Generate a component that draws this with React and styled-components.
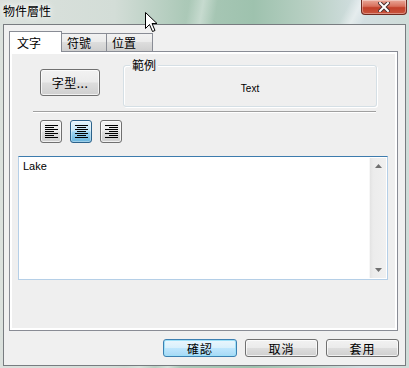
import React from 'react'
import styled, { createGlobalStyle, css } from 'styled-components'

const GlobalStyle = createGlobalStyle`
  html, body { margin: 0; padding: 0; }
  body {
    width: 409px;
    height: 368px;
    overflow: hidden;
    font-family: "Noto Sans CJK TC", "Liberation Sans", sans-serif;
  }
`

const Glass = styled.div`
  position: relative;
  width: 409px;
  height: 368px;
  display: flex;
  flex-direction: column;
  background:
    linear-gradient(118deg, transparent 58%, rgba(255,255,255,.45) 60%, transparent 62%),
    linear-gradient(100deg, transparent 40%, rgba(255,255,255,.35) 43%, transparent 46%),
    linear-gradient(90deg, #dbe1dd 0%, #d3ddd7 28%, #acc9b8 45%, #9ec2ae 62%, #b9d0c4 76%, #d3dfe2 88%, #cfdcd8 100%);
`

const TitleBar = styled.div`
  height: 24px;
  display: flex;
  align-items: flex-start;
`

const Title = styled.span`
  margin: 4px 0 0 3px;
  font-size: 12px;
  line-height: 14px;
  color: #000;
  text-shadow: 0 0 5px #fff, 0 0 8px #fff;
`

const CloseButton = styled.div`
  margin-left: auto;
  margin-right: 2px;
  width: 46px;
  height: 15px;
  box-sizing: border-box;
  border: 1px solid #6f2a20;
  border-top: none;
  border-radius: 0 0 4px 4px;
  background: linear-gradient(#e9a899 0%, #d8705c 45%, #c2402a 55%, #c9553e 100%);
  box-shadow: inset 0 0 0 1px rgba(255,255,255,.35);
  display: flex;
  align-items: center;
  justify-content: center;
`

const Client = styled.div`
  flex: 1;
  margin: 0 3px 2px 3px;
  border: 1px solid #787c80;
  background: #f0f0f0;
  display: flex;
  flex-direction: column;
  padding: 6px 6px 0 5px;
`

const TabRow = styled.div`
  display: flex;
  align-items: flex-end;
  height: 20px;
  position: relative;
  z-index: 1;
`

const Tab = styled.div`
  box-sizing: border-box;
  width: ${p => p.$w}px;
  height: 18px;
  border: 1px solid #898c95;
  border-bottom: none;
  margin-left: -1px;
  padding: 1px 0 0 5px;
  font-size: 12px;
  line-height: 15px;
  color: #000;
  background: linear-gradient(#f2f2f2 0%, #ebebeb 45%, #dddddd 50%, #cfcfcf 100%);
  ${p => p.$active && css`
    height: 21px;
    margin-bottom: -1px;
    margin-left: 0;
    padding: 3px 0 0 7px;
    background: #fff;
  `}
`

const Panel = styled.div`
  box-sizing: border-box;
  width: 389px;
  height: 280px;
  border: 1px solid #898c95;
  background: #efefef;
  box-shadow: inset 0 0 0 2px #fff;
  display: flex;
  flex-direction: column;
`

const TopRow = styled.div`
  display: flex;
  align-items: flex-start;
  margin-top: 6px;
  padding-left: 30px;
`

const buttonFace = css`
  box-sizing: border-box;
  border: 1px solid #707070;
  border-radius: 3px;
  background: linear-gradient(#f2f2f2 0%, #ebebeb 48%, #dddddd 52%, #cfcfcf 100%);
  box-shadow: inset 0 0 0 1px rgba(255,255,255,.7);
  font-size: 12px;
  color: #000;
  display: flex;
  align-items: center;
  justify-content: center;
`

const FontButton = styled.div`
  ${buttonFace}
  width: 60px;
  height: 27px;
  margin-top: 11px;
  letter-spacing: 0.5px;
`

const Group = styled.fieldset`
  margin: 0 0 0 23px;
  width: 254px;
  box-sizing: border-box;
  padding: 10px 0 10px 0;
  border: 1px solid #d5dfe5;
  border-radius: 3px;
  box-shadow: inset 1px 1px 0 #fff, 1px 1px 0 #fff;
  min-inline-size: 0;
`

const Legend = styled.legend`
  margin-left: 6px;
  padding: 0 2px;
  font-size: 12px;
  line-height: 14px;
  background: #efefef;
`

const Sample = styled.div`
  text-align: center;
  font-family: "Liberation Sans", Arial, sans-serif;
  font-size: 10px;
  line-height: 14px;
  color: #000;
`

const Separator = styled.div`
  margin: 4px 0 0 23px;
  width: 343px;
  height: 1px;
  background: #a0a0a0;
  border-bottom: 1px solid #fff;
`

const AlignRow = styled.div`
  display: flex;
  gap: 8px;
  margin: 7px 0 0 30px;
`

const AlignButton = styled.div`
  ${buttonFace}
  width: 22px;
  height: 23px;
  ${p => p.$pressed && css`
    border-color: #2c628b;
    background: linear-gradient(#e5f4fc 0%, #c4e5f6 45%, #98d1ef 55%, #68b3db 100%);
    box-shadow: inset 0 0 0 1px rgba(255,255,255,.35);
  `}
`

const Memo = styled.div`
  box-sizing: border-box;
  margin: 13px 0 0 8px;
  width: 370px;
  height: 124px;
  border: 1px solid #b5cfe7;
  border-top-color: #3d7bad;
  background: #fff;
  display: flex;
`

const MemoText = styled.div`
  flex: 1;
  padding: 3px 4px;
  font-family: "Liberation Sans", Arial, sans-serif;
  font-size: 11px;
  line-height: 13px;
  color: #000;
`

const ScrollTrack = styled.div`
  width: 16px;
  margin: 1px 1px 1px 0;
  background: linear-gradient(90deg, #e3e3e3, #ececec 20%, #f0f0f0);
  border-left: 1px solid #f7f7f7;
  display: flex;
  flex-direction: column;
  justify-content: space-between;
  align-items: center;
  padding: 6px 0 6px;
`

const BottomRow = styled.div`
  display: flex;
  justify-content: flex-end;
  gap: 8px;
  margin-top: 8px;
  padding-right: 0;
`

const DialogButton = styled.div`
  ${buttonFace}
  width: ${p => p.$w}px;
  height: 18px;
  letter-spacing: 1px;
  ${p => p.$default && css`
    border-color: #3c7fb1;
    background: linear-gradient(#eaf6fd 0%, #d9f0fc 48%, #bee6fd 52%, #a7d9f5 100%);
    box-shadow: inset 0 0 0 1px #9ee0f8;
  `}
`

const Cursor = styled.svg`
  position: absolute;
  left: 145px;
  top: 12px;
`

function AlignIcon({ mode }) {
  const widths = [13, 9, 13, 9, 13, 9, 13]
  return (
    <svg width="13" height="13" viewBox="0 0 13 13">
      {widths.map((w, i) => {
        const x = mode === 'left' ? 0 : mode === 'right' ? 13 - w : (13 - w) / 2
        return <rect key={i} x={x} y={i * 2} width={w} height="1" fill="#000" />
      })}
    </svg>
  )
}

function Arrow({ up }) {
  return (
    <svg width="7" height="4" viewBox="0 0 7 4">
      <polygon points={up ? '3.5,0 7,4 0,4' : '0,0 7,0 3.5,4'} fill="#707070" />
    </svg>
  )
}

export default function App() {
  return (
    <>
      <GlobalStyle />
      <Glass>
        <TitleBar>
          <Title>物件層性</Title>
          <CloseButton>
            <svg width="12" height="10" viewBox="0 0 12 10">
              <path d="M2 1 L10 9 M10 1 L2 9" stroke="#4a3030" strokeWidth="4" strokeLinecap="square" />
              <path d="M2 1 L10 9 M10 1 L2 9" stroke="#fff" strokeWidth="2" strokeLinecap="square" />
            </svg>
          </CloseButton>
        </TitleBar>
        <Client>
          <TabRow>
            <Tab $active $w={53}>文字</Tab>
            <Tab $w={46}>符號</Tab>
            <Tab $w={47}>位置</Tab>
          </TabRow>
          <Panel>
            <TopRow>
              <FontButton>字型...</FontButton>
              <Group>
                <Legend>範例</Legend>
                <Sample>Text</Sample>
              </Group>
            </TopRow>
            <Separator />
            <AlignRow>
              <AlignButton><AlignIcon mode="left" /></AlignButton>
              <AlignButton $pressed><AlignIcon mode="center" /></AlignButton>
              <AlignButton><AlignIcon mode="right" /></AlignButton>
            </AlignRow>
            <Memo>
              <MemoText>Lake</MemoText>
              <ScrollTrack>
                <Arrow up />
                <Arrow />
              </ScrollTrack>
            </Memo>
          </Panel>
          <BottomRow>
            <DialogButton $default $w={74}>確認</DialogButton>
            <DialogButton $w={73}>取消</DialogButton>
            <DialogButton $w={73}>套用</DialogButton>
          </BottomRow>
        </Client>
        <Cursor width="13" height="21" viewBox="0 0 13 21">
          <path d="M0.5 0.5 L0.5 16.5 L4.5 12.5 L7.5 19.5 L10 18.5 L7 11.5 L12 11.5 Z" fill="#fff" stroke="#000" strokeWidth="1" />
        </Cursor>
      </Glass>
    </>
  )
}
